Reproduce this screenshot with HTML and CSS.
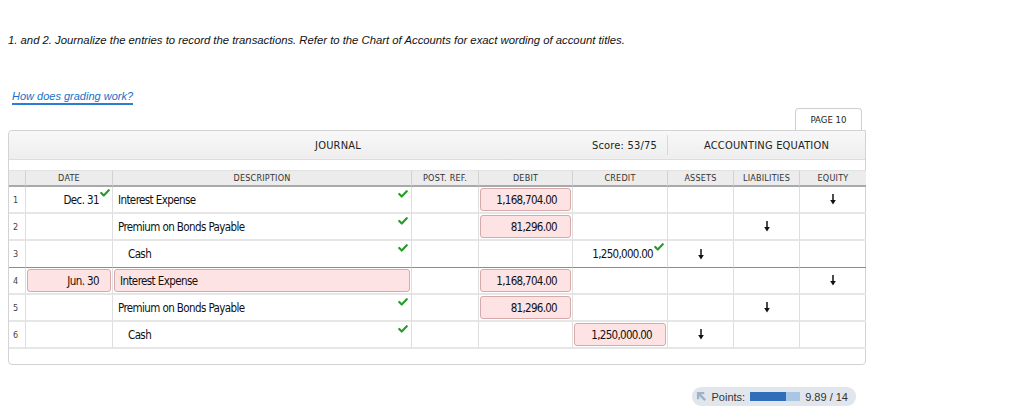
FILE: index.html
```html
<!DOCTYPE html>
<html>
<head>
<meta charset="utf-8">
<link rel="stylesheet" href="styles.css">
</head>
<body>
<p class="instr">1. and 2. Journalize the entries to record the transactions. Refer to the Chart of Accounts for exact wording of account titles.</p>
<a class="grading" href="#">How does grading work?</a>

<div class="journal-wrap">
  <div class="tabs"><div class="tab">PAGE 10</div></div>
  <div class="panel">
    <div class="band">
      <div class="band-journal">
        <span class="band-title">JOURNAL</span>
        <span class="score">Score: 53/75</span>
      </div>
      <div class="band-eq">ACCOUNTING EQUATION</div>
    </div>
    <div class="spacer"></div>
    <div class="grid">
      <div class="ch num"></div>
      <div class="ch">DATE</div>
      <div class="ch">DESCRIPTION</div>
      <div class="ch">POST. REF.</div>
      <div class="ch">DEBIT</div>
      <div class="ch">CREDIT</div>
      <div class="ch">ASSETS</div>
      <div class="ch">LIABILITIES</div>
      <div class="ch last">EQUITY</div>

      <!-- row 1 -->
      <div class="c num">1</div>
      <div class="c date"><span class="val">Dec. 31</span><svg class="chk sup" viewBox="0 0 12 9"><path d="M1.5 4.5 L4.5 7.5 L10.5 1.2"/></svg></div>
      <div class="c desc"><span class="val">Interest Expense</span><svg class="chk corner" viewBox="0 0 12 9"><path d="M1.5 4.5 L4.5 7.5 L10.5 1.2"/></svg></div>
      <div class="c"></div>
      <div class="c amt"><div class="box">1,168,704.00</div></div>
      <div class="c amt"></div>
      <div class="c eq"></div>
      <div class="c eq"></div>
      <div class="c eq last"><svg class="arr" viewBox="0 0 8 11"><path d="M4 0 V7"/><polygon points="1.2,6 6.8,6 4,10.5"/></svg></div>

      <!-- row 2 -->
      <div class="c num">2</div>
      <div class="c date"></div>
      <div class="c desc"><span class="val">Premium on Bonds Payable</span><svg class="chk corner" viewBox="0 0 12 9"><path d="M1.5 4.5 L4.5 7.5 L10.5 1.2"/></svg></div>
      <div class="c"></div>
      <div class="c amt"><div class="box">81,296.00</div></div>
      <div class="c amt"></div>
      <div class="c eq"></div>
      <div class="c eq"><svg class="arr" viewBox="0 0 8 11"><path d="M4 0 V7"/><polygon points="1.2,6 6.8,6 4,10.5"/></svg></div>
      <div class="c eq last"></div>

      <!-- row 3 -->
      <div class="c num sep">3</div>
      <div class="c date sep"></div>
      <div class="c desc sep"><span class="val indent">Cash</span><svg class="chk corner" viewBox="0 0 12 9"><path d="M1.5 4.5 L4.5 7.5 L10.5 1.2"/></svg></div>
      <div class="c sep"></div>
      <div class="c amt sep"></div>
      <div class="c amt sep"><span class="val plain">1,250,000.00</span><svg class="chk sup2" viewBox="0 0 12 9"><path d="M1.5 4.5 L4.5 7.5 L10.5 1.2"/></svg></div>
      <div class="c eq sep"><svg class="arr" viewBox="0 0 8 11"><path d="M4 0 V7"/><polygon points="1.2,6 6.8,6 4,10.5"/></svg></div>
      <div class="c eq sep"></div>
      <div class="c eq last sep"></div>

      <!-- row 4 -->
      <div class="c num">4</div>
      <div class="c date boxed"><div class="box datebox">Jun. 30</div></div>
      <div class="c desc"><div class="box descbox">Interest Expense</div></div>
      <div class="c"></div>
      <div class="c amt"><div class="box">1,168,704.00</div></div>
      <div class="c amt"></div>
      <div class="c eq"></div>
      <div class="c eq"></div>
      <div class="c eq last"><svg class="arr" viewBox="0 0 8 11"><path d="M4 0 V7"/><polygon points="1.2,6 6.8,6 4,10.5"/></svg></div>

      <!-- row 5 -->
      <div class="c num">5</div>
      <div class="c date"></div>
      <div class="c desc"><span class="val">Premium on Bonds Payable</span><svg class="chk corner" viewBox="0 0 12 9"><path d="M1.5 4.5 L4.5 7.5 L10.5 1.2"/></svg></div>
      <div class="c"></div>
      <div class="c amt"><div class="box">81,296.00</div></div>
      <div class="c amt"></div>
      <div class="c eq"></div>
      <div class="c eq"><svg class="arr" viewBox="0 0 8 11"><path d="M4 0 V7"/><polygon points="1.2,6 6.8,6 4,10.5"/></svg></div>
      <div class="c eq last"></div>

      <!-- row 6 -->
      <div class="c num">6</div>
      <div class="c date"></div>
      <div class="c desc"><span class="val indent">Cash</span><svg class="chk corner" viewBox="0 0 12 9"><path d="M1.5 4.5 L4.5 7.5 L10.5 1.2"/></svg></div>
      <div class="c"></div>
      <div class="c amt"></div>
      <div class="c amt"><div class="box">1,250,000.00</div></div>
      <div class="c eq"><svg class="arr" viewBox="0 0 8 11"><path d="M4 0 V7"/><polygon points="1.2,6 6.8,6 4,10.5"/></svg></div>
      <div class="c eq"></div>
      <div class="c eq last"></div>
    </div>
  </div>
</div>

<div class="points-row">
  <div class="points">
    <svg class="pts-icon" viewBox="0 0 12 12"><polygon points="1,1 9,1 9,3.5 5.5,3.5 11,9 9,11 3.5,5.5 3.5,9 1,9"/></svg>
    <span class="pts-label">Points:</span>
    <span class="bar"><span class="fill" style="width:72%"></span></span>
    <span class="pts-val">9.89 / 14</span>
  </div>
</div>
</body>
</html>
```

FILE: styles.css
```css
html, body {
  margin: 0;
  padding: 0;
  background: #ffffff;
}
body {
  width: 1024px;
  height: 408px;
  overflow: hidden;
  font-family: "Liberation Sans", Arial, sans-serif;
  color: #222;
}
.instr {
  margin: 0;
  padding: 34px 0 0 8px;
  font-size: 11.3px;
  font-style: italic;
  line-height: 13px;
  color: #111;
}
.grading {
  display: inline-block;
  margin: 43px 0 0 12px;
  font-size: 11px;
  line-height: 13px;
  font-style: italic;
  color: #1a6fc6;
  text-decoration: none;
  border-bottom: 2px solid #2a7fd4;
}
.journal-wrap {
  margin: 3px 0 0 8px;
  width: 858px;
}
.tabs {
  display: flex;
  justify-content: flex-end;
  padding-right: 4px;
}
.tab {
  width: 65px;
  height: 21px;
  border: 1px solid #cfcfcf;
  border-bottom: none;
  border-radius: 4px 4px 0 0;
  font-family: "DejaVu Sans Condensed", "DejaVu Sans", sans-serif;
  font-size: 9.5px;
  line-height: 21px;
  text-align: center;
  color: #222;
  background: #fff;
}
.panel {
  border: 1px solid #d3d3d3;
  border-radius: 4px 0 4px 4px;
  padding-bottom: 15px;
  font-family: "DejaVu Sans Condensed", "DejaVu Sans", sans-serif;
}
.band {
  display: flex;
  height: 28px;
  border-bottom: 1px solid #dcdcdc;
  background: linear-gradient(#f8f8f8, #eeeeee);
  border-radius: 4px 0 0 0;
}
.band-journal {
  width: 658px;
  position: relative;
  display: flex;
  align-items: center;
  justify-content: center;
  border-right: 1px solid #d8d8d8;
  margin: 4px 0;
  font-size: 11px;
  color: #222;
}
.band-title {
  letter-spacing: 0.2px;
}
.score {
  position: absolute;
  right: 10px;
  top: 4px;
  font-size: 11px;
  letter-spacing: 0.2px;
  color: #222;
}
.band-eq {
  flex: 1;
  display: flex;
  align-items: center;
  justify-content: center;
  font-size: 11px;
  letter-spacing: 0.2px;
  color: #222;
}
.spacer {
  height: 10px;
}
.grid {
  display: grid;
  grid-template-columns: 17px 87px 299px 67px 94px 95px 66px 66px 66px;
}
.ch {
  height: 14px;
  line-height: 15px;
  background: #ececec;
  border-right: 1px solid #d2d2d2;
  border-bottom: 2px solid #a9a9a9;
  border-top: 1px solid #e2e2e2;
  font-size: 9px;
  text-align: center;
  color: #333;
  letter-spacing: 0.2px;
}
.ch.last, .c.last {
  border-right: none;
}
.c {
  position: relative;
  height: 25px;
  border-right: 1px solid #dedede;
  border-bottom: 2px solid #e6e6e6;
  display: flex;
  align-items: center;
  font-size: 11.5px;
  letter-spacing: -0.6px;
  color: #111;
}
.c.sep {
  border-bottom: 1px solid #8c8c8c;
  height: 26px;
}
.c.num {
  font-size: 9px;
  letter-spacing: 0;
  color: #444;
  padding-left: 4px;
}
.c.date {
  justify-content: flex-end;
  padding-right: 13px;
}
.c.date.boxed {
  padding-right: 0;
}
.c.desc .val {
  padding-left: 5px;
}
.c.desc .val.indent {
  padding-left: 15px;
}
.c.amt {
  justify-content: flex-end;
  letter-spacing: -0.7px;
}
.c.eq {
  justify-content: center;
}
.val.plain {
  padding-right: 14px;
}
.box {
  box-sizing: border-box;
  height: 23px;
  margin: 0 1px;
  width: calc(100% - 2px);
  border: 1px solid #d8a9a9;
  border-radius: 3px;
  background: #fde3e3;
  display: flex;
  align-items: center;
  justify-content: flex-end;
  padding-right: 13px;
  color: #111;
}
.box.datebox {
  padding-right: 11px;
}
.box.descbox {
  justify-content: flex-start;
  padding-left: 5px;
}
.chk {
  position: absolute;
  width: 10px;
  height: 8px;
}
.chk path {
  fill: none;
  stroke: #2b9a2b;
  stroke-width: 2.6;
  stroke-linecap: round;
  stroke-linejoin: round;
}
.chk.corner {
  right: 3px;
  top: 3px;
}
.chk.sup {
  right: 2px;
  top: 2px;
}
.chk.sup2 {
  right: 3px;
  top: 2px;
}
.arr {
  width: 8px;
  height: 11px;
}
.arr path {
  stroke: #111;
  stroke-width: 1.5;
  fill: none;
}
.arr polygon {
  fill: #111;
}
.points-row {
  display: flex;
  justify-content: flex-end;
  width: 856px;
  margin-top: 22px;
}
.points {
  display: flex;
  align-items: center;
  height: 19px;
  padding: 0 8px 0 4px;
  background: #e1e6ed;
  border-radius: 9px;
  font-family: "Liberation Sans", Arial, sans-serif;
  font-size: 11px;
  color: #333;
}
.pts-icon {
  width: 11px;
  height: 11px;
  margin-right: 5px;
}
.pts-icon polygon {
  fill: #9fb3c8;
}
.pts-label {
  margin-right: 5px;
}
.bar {
  display: block;
  width: 50px;
  height: 9px;
  background: #a9c6e4;
  margin-right: 5px;
}
.fill {
  display: block;
  height: 100%;
  background: #2f6fba;
}
.pts-val {
  color: #333;
}
```
